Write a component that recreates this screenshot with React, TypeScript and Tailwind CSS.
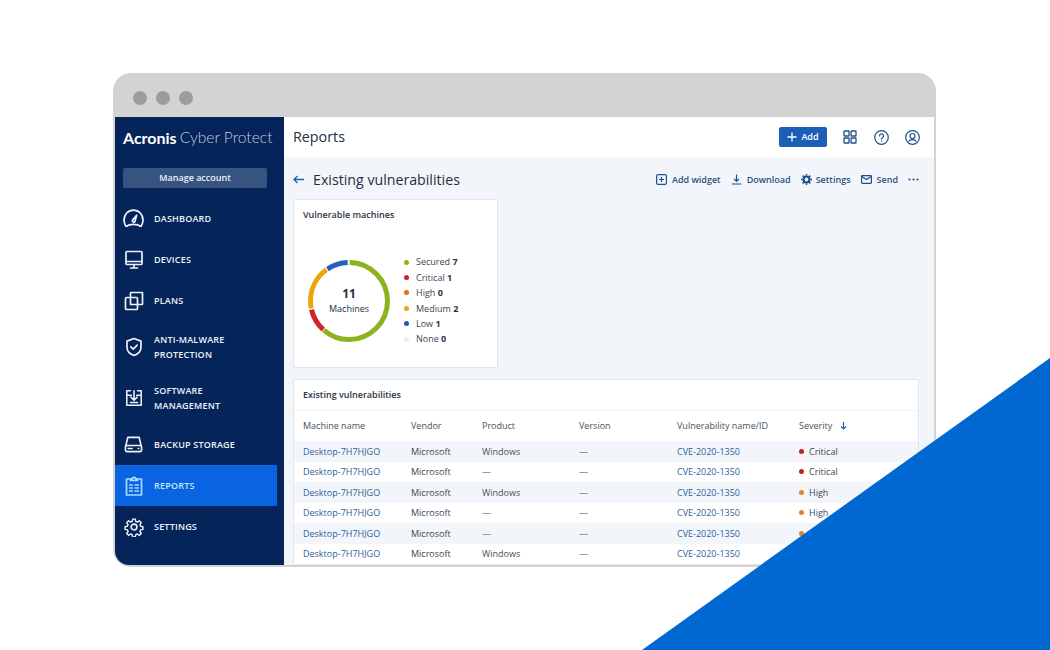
import React from "react";

const S = { fill: "none", stroke: "currentColor", strokeWidth: 1.7, strokeLinecap: "round", strokeLinejoin: "round" } as const;

const Dash = () => (
  <svg width="21" height="21" viewBox="0 0 21 21" {...S}>
    <path d="M4.200 18.200H2.900C1.900 16.600 1 14.600 1 12.200 1 6.400 5.200 2.200 10.500 2.200S20 6.400 20 12.200c0 2.400-.9 4.400-1.900 6h-1.300c-.9-1.300-2.400-1.900-6.300-1.900s-5.400.6-6.300 1.900z" />
    <path d="M9.400 12.400l4.200-5.200-1.600 6.200a1.400 1.400 0 0 1-2.600-1z" />
  </svg>
);
const Devices = () => (
  <svg width="20" height="20" viewBox="0 0 20 20" {...S}>
    <rect x="2" y="1.500" width="16" height="13" rx="1" />
    <path d="M2 11.500h16M10 14.500v3M6.500 18h7" />
  </svg>
);
const Plans = () => (
  <svg width="20" height="20" viewBox="0 0 20 20" {...S}>
    <rect x="1.500" y="6.500" width="12" height="12" rx="1" />
    <path d="M6.500 6.500V2a.5.5 0 0 1 .5-.5h11a.5.5 0 0 1 .5.5v11a.5.5 0 0 1-.5.5h-4.500" />
    <path d="M6.500 6.500v7h7" />
  </svg>
);
const Shield = () => (
  <svg width="20" height="20" viewBox="0 0 20 20" {...S}>
    <path d="M10 1.500l7 2.600v6.200c0 4-3 6.800-7 8.200-4-1.400-7-4.200-7-8.200V4.100z" />
    <path d="M6.800 9.800l2.400 2.400 4-4" />
  </svg>
);
const Software = () => (
  <svg width="18" height="18" viewBox="0 0 20 20" {...S}>
    <path d="M6 2H2v16h16V2h-4M2 7h5M13 7h5M10 2v10M6.500 9l3.500 3.500L13.500 9M6 15h8" />
  </svg>
);
const Backup = () => (
  <svg width="19" height="19" viewBox="0 0 20 20" {...S}>
    <path d="M2 11l2-8.500h12l2 8.500" />
    <rect x="1.500" y="11" width="17" height="6.500" rx="2" />
    <path d="M4.500 14.200h4M15 14.200h.5" />
  </svg>
);
const ReportIcon = () => (
  <svg width="20" height="20" viewBox="0 0 20 20" {...S} stroke="#a8dcff">
    <path d="M6 3H2.500v16h15V3H14" />
    <path d="M6.500 4.500V2.800h2a1.500 1.500 0 0 1 3 0h2v1.700z" />
    <path d="M5.500 9h3M11 9h3.500M5.500 12h3M11 12h3.500M5.500 15h3M11 15h3.500" strokeWidth="1.300" />
  </svg>
);
const Gear = ({ size = 20 }: { size?: number }) => (
  <svg width={size} height={size} viewBox="0 0 24 24" {...S} strokeWidth="1.900">
    <circle cx="12" cy="12" r="3.500" />
    <path d="M10.200 1.500h3.600l.6 3.100 2.200.9 2.600-1.800 2.500 2.500-1.800 2.600.9 2.200 3.100.6v3.600l-3.100.6-.9 2.200 1.800 2.600-2.500 2.500-2.600-1.800-2.200.9-.6 3.100h-3.600l-.6-3.100-2.200-.9-2.600 1.800-2.500-2.500 1.800-2.600-.9-2.200-3.100-.6v-3.600l3.100-.6.9-2.200-1.800-2.600 2.500-2.500 2.600 1.800 2.200-.9z" transform="translate(1.200 1.200) scale(.9)" />
  </svg>
);

const NavRow = ({ icon, label, tall, active }: { icon: React.ReactNode; label: React.ReactNode; tall?: boolean; active?: boolean }) => (
  <div className={`flex items-center pl-[8px] gap-[10px] w-[162px] ${tall ? "h-[51.500px]" : "h-[41px]"} ${active ? "bg-[#0a64e2] text-[#c5e6ff]" : "text-[#eef2f8]"}`}>
    <span className="w-[21px] flex justify-center shrink-0">{icon}</span>
    <span className="text-[9px] font-semibold leading-[15px] tracking-[0.2px] uppercase">{label}</span>
  </div>
);

const legend = [
  ["Secured", "7", "bg-[#8cb31f]"],
  ["Critical", "1", "bg-[#c9202c]"],
  ["High", "0", "bg-[#e0701c]"],
  ["Medium", "2", "bg-[#f0a31a]"],
  ["Low", "1", "bg-[#2456ae]"],
  ["None", "0", "bg-[#eceef2]"],
];

const rows = [
  ["Windows", "Critical", "bg-[#c4202c]"],
  ["—", "Critical", "bg-[#c4202c]"],
  ["Windows", "High", "bg-[#e58024]"],
  ["—", "High", "bg-[#e58024]"],
  ["—", "High", "bg-[#e58024]"],
  ["Windows", "High", "bg-[#e58024]"],
];

const Seg = ({ start, len, color }: { start: number; len: number; color: string }) => (
  <circle cx="42" cy="42" r="38.500" fill="none" stroke={color} strokeWidth="5" pathLength={360} strokeDasharray={`${len} 360`} strokeDashoffset={-start} transform="rotate(-90 42 42)" />
);

const Tool = ({ icon, label }: { icon: React.ReactNode; label: string }) => (
  <span className="flex items-center gap-[5px]">
    {icon}
    <span>{label}</span>
  </span>
);

export default function App() {
  return (
    <div className="relative w-[1050px] h-[650px] bg-white overflow-hidden pt-[73px] pl-[113px] font-['Open_Sans',sans-serif]">
      <div className="w-[823px] h-[494px] rounded-[18px] bg-[#d3d3d3] overflow-hidden flex flex-col">
        <div className="h-[44px] shrink-0 flex items-center gap-[9px] pl-[20px] pt-[6px]">
          <span className="w-[14px] h-[14px] rounded-full bg-[#9c9c9c]" />
          <span className="w-[14px] h-[14px] rounded-full bg-[#9c9c9c]" />
          <span className="w-[14px] h-[14px] rounded-full bg-[#9c9c9c]" />
        </div>
        <div className="flex flex-1 min-h-0 ml-[2px] mr-[2px] mb-[2px] rounded-bl-[14px] overflow-hidden">
          <aside className="w-[169px] shrink-0 bg-[#04245a] flex flex-col text-white">
            <div className="h-[41px] flex items-center pl-[8px] whitespace-nowrap font-['Lato',sans-serif] text-[16px]">
              <span className="font-bold">Acronis</span>
              <span className="font-light ml-[3px] text-[15.600px] text-[#c2cbdb]">Cyber Protect</span>
            </div>
            <div className="mt-[10px] ml-[8px] w-[144px] h-[20px] rounded-[2px] bg-[#36547f] flex items-center justify-center text-[9px] font-semibold text-[#eef2f8]">
              Manage account
            </div>
            <div className="mt-[10px] flex flex-col">
              <NavRow icon={<Dash />} label="Dashboard" />
              <NavRow icon={<Devices />} label="Devices" />
              <NavRow icon={<Plans />} label="Plans" />
              <NavRow tall icon={<Shield />} label={<>Anti-malware<br />protection</>} />
              <NavRow tall icon={<Software />} label={<>Software<br />management</>} />
              <NavRow icon={<Backup />} label="Backup storage" />
              <NavRow active icon={<ReportIcon />} label="Reports" />
              <NavRow icon={<Gear />} label="Settings" />
            </div>
          </aside>
          <main className="flex-1 min-w-0 bg-[#f2f6fb] flex flex-col">
            <header className="h-[40px] shrink-0 bg-white flex items-center pl-[9px] pr-[14px]">
              <span className="text-[14.300px] text-[#22303f]">Reports</span>
              <span className="ml-auto w-[48px] h-[20px] rounded-[2px] bg-[#1c5fb9] flex items-center justify-center gap-[4px] text-white text-[9px] font-semibold">
                <svg width="10" height="10" viewBox="0 0 10 10" stroke="currentColor" strokeWidth="1.300"><path d="M5 .5v9M.5 5h9" /></svg>
                Add
              </span>
              <span className="ml-[16px] text-[#1f4f8f] flex">
                <svg width="14" height="14" viewBox="0 0 14 14" fill="none" stroke="currentColor" strokeWidth="1.300">
                  <rect x="1" y="1" width="5" height="5" rx=".6" /><rect x="8" y="1" width="5" height="5" rx=".6" /><rect x="1" y="8" width="5" height="5" rx=".6" /><rect x="8" y="8" width="5" height="5" rx=".6" />
                </svg>
              </span>
              <span className="ml-[17px] text-[#1f4f8f] flex">
                <svg width="15" height="15" viewBox="0 0 15 15" fill="none" stroke="currentColor" strokeWidth="1.200" strokeLinecap="round">
                  <circle cx="7.500" cy="7.500" r="6.800" /><path d="M5.500 6a2 2 0 1 1 3 1.700c-.7.4-1 .8-1 1.500" /><path d="M7.500 11v.2" />
                </svg>
              </span>
              <span className="ml-[16px] text-[#1f4f8f] flex">
                <svg width="15" height="15" viewBox="0 0 15 15" fill="none" stroke="currentColor" strokeWidth="1.200">
                  <circle cx="7.500" cy="7.500" r="6.800" /><circle cx="7.500" cy="6" r="2.500" /><path d="M3.500 11.500c1-1.300 2.300-1.800 4-1.800s3 .5 4 1.800" />
                </svg>
              </span>
            </header>
            <div className="flex-1 min-h-0 overflow-hidden pl-[9px] pr-[15px]">
              <div className="h-[42px] pt-[3px] flex items-center">
                <svg width="11" height="9" viewBox="0 0 11 9" fill="none" stroke="#1f5fae" strokeWidth="1.300"><path d="M11 4.500H1M4.500 1L1 4.500 4.500 8" /></svg>
                <span className="ml-[9px] text-[14.200px] text-[#22303f]">Existing vulnerabilities</span>
                <div className="ml-auto flex items-center gap-[10px] text-[9px] font-semibold text-[#2c4f7e]">
                  <Tool label="Add widget" icon={
                    <svg width="11" height="11" viewBox="0 0 11 11" fill="none" stroke="#1c4f90" strokeWidth="1.200"><rect x=".6" y=".6" width="9.800" height="9.800" rx="1.500" /><path d="M5.500 3v5M3 5.500h5" /></svg>
                  } />
                  <Tool label="Download" icon={
                    <svg width="11" height="11" viewBox="0 0 11 11" fill="none" stroke="#1c4f90" strokeWidth="1.200"><path d="M5.500 .5v6.500M3 4.800l2.500 2.500L8 4.800M.8 10h9.400" /></svg>
                  } />
                  <span className="flex items-center gap-[4px]">
                    <svg width="11" height="11" viewBox="0 0 11 11" fill="none" stroke="#1c4f90" strokeWidth="2.200"><circle cx="5.500" cy="5.500" r="3" /><path d="M5.500 0v1.500M5.500 9.500V11M0 5.500h1.500M9.500 5.500H11M1.600 1.600l1 1M8.400 8.400l1 1M1.600 9.400l1-1M8.400 2.600l1-1" strokeWidth="1.500" /></svg>
                    Settings
                  </span>
                  <Tool label="Send" icon={
                    <svg width="11" height="9" viewBox="0 0 11 9" fill="none" stroke="#1c4f90" strokeWidth="1.200"><rect x=".6" y=".6" width="9.800" height="7.800" rx=".8" /><path d="M.8 1.500l4.700 3 4.700-3" /></svg>
                  } />
                  <svg width="11" height="3" viewBox="0 0 11 3" fill="#2c4f7e"><circle cx="1.500" cy="1.500" r="1.100" /><circle cx="5.500" cy="1.500" r="1.100" /><circle cx="9.500" cy="1.500" r="1.100" /></svg>
                </div>
              </div>
              <section className="w-[205px] h-[169px] bg-white border border-[#e2e6ec] rounded-[2px] px-[9px] pt-[8px]">
                <div className="text-[9px] font-semibold text-[#2a3542]">Vulnerable machines</div>
                <div className="mt-[33px] flex items-center ml-[6px]">
                  <div className="relative w-[84px] h-[84px] shrink-0 -ml-[2px]">
                    <svg width="84" height="84" viewBox="0 0 84 84">
                      <Seg start={1} len={220} color="#8cb31f" />
                      <Seg start={222} len={35} color="#d1232a" />
                      <Seg start={259} len={65} color="#f0a30a" />
                      <Seg start={326} len={32} color="#2560c0" />
                    </svg>
                    <div className="absolute inset-0 flex flex-col items-center justify-center text-[#22303f]">
                      <span className="text-[12px] font-bold leading-[16px]">11</span>
                      <span className="text-[9px] leading-[14px]">Machines</span>
                    </div>
                  </div>
                  <ul className="ml-[13px] flex flex-col">
                    {legend.map(([n, v, c]) => (
                      <li key={n} className="flex items-center h-[15.400px] text-[9px] text-[#3a4653]">
                        <span className={`w-[5px] h-[5px] rounded-full ${c}`} />
                        <span className="ml-[7px]">{n} <b className="font-bold text-[#2a3542]">{v}</b></span>
                      </li>
                    ))}
                  </ul>
                </div>
              </section>
              <section className="mt-[11px] w-[626px] bg-white border border-[#e2e6ec] rounded-[2px]">
                <div className="h-[31px] flex items-center pl-[9px] text-[9px] font-semibold text-[#2a3542] border-b border-[#f2f4f7]">Existing vulnerabilities</div>
                <div className="grid grid-cols-[117px_71px_97px_98px_122px_1fr] h-[30px] items-center text-[9px] text-[#46525e]">
                  <span className="pl-[9px]">Machine name</span><span>Vendor</span><span>Product</span><span>Version</span><span>Vulnerability name/ID</span>
                  <span className="flex items-center gap-[8px]">Severity
                    <svg width="7" height="8" viewBox="0 0 7 8" fill="none" stroke="#1f5fae" strokeWidth="1.200"><path d="M3.500 0v7M1 4.500l2.500 2.500L6 4.500" /></svg>
                  </span>
                </div>
                {rows.map(([p, s, c], i) => (
                  <div key={i} className={`grid grid-cols-[117px_71px_97px_98px_122px_1fr] h-[20.500px] items-center text-[9px] ${i % 2 === 0 ? "bg-[#f2f6fb]" : "bg-white"}`}>
                    <span className="pl-[9px] text-[#2f5f98]">Desktop-7H7HJGO</span>
                    <span className="text-[#3a4653]">Microsoft</span>
                    <span className="text-[#46525e]">{p}</span>
                    <span className="text-[#46525e]">—</span>
                    <span className="text-[#2f5f98]">CVE-2020-1350</span>
                    <span className="flex items-center gap-[5px] text-[#3a4653]"><span className={`w-[5px] h-[5px] rounded-full ${c}`} />{s}</span>
                  </div>
                ))}
              </section>
            </div>
          </main>
        </div>
      </div>
      <svg className="absolute right-0 bottom-0" width="408" height="292" viewBox="0 0 408 292"><path d="M408 0V292H0z" fill="#0068d0" /></svg>
    </div>
  );
}
